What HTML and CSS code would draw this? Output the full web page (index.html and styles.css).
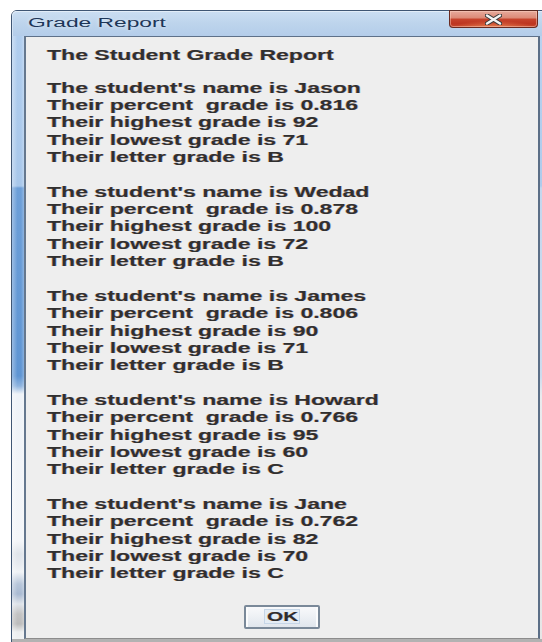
FILE: index.html
```html
<!DOCTYPE html>
<html lang="en">
<head>
<meta charset="utf-8">
<title>Grade Report</title>
<link rel="stylesheet" href="styles.css">
</head>
<body>
<div class="window">
  <div class="titlebar">
    <span class="caption">Grade Report</span>
    <button class="close" type="button" aria-label="Close">
      <svg width="17" height="11" viewBox="0 0 17 11">
        <path d="M2 1.5 L15 9.5 M15 1.5 L2 9.5" stroke="#3b3b3b" stroke-width="4.4" stroke-linecap="round"/>
        <path d="M2 1.5 L15 9.5 M15 1.5 L2 9.5" stroke="#f4f4f4" stroke-width="2.4" stroke-linecap="round"/>
      </svg>
    </button>
  </div>
  <div class="frame-row">
    <div class="frame-left"></div>
    <div class="panel">
      <div class="report">
        <p class="heading">The Student Grade Report</p>
        <div class="student">
          <p>The student's name is Jason</p>
          <p>Their percent  grade is 0.816</p>
          <p>Their highest grade is 92</p>
          <p>Their lowest grade is 71</p>
          <p>Their letter grade is B</p>
        </div>
        <div class="student">
          <p>The student's name is Wedad</p>
          <p>Their percent  grade is 0.878</p>
          <p>Their highest grade is 100</p>
          <p>Their lowest grade is 72</p>
          <p>Their letter grade is B</p>
        </div>
        <div class="student">
          <p>The student's name is James</p>
          <p>Their percent  grade is 0.806</p>
          <p>Their highest grade is 90</p>
          <p>Their lowest grade is 71</p>
          <p>Their letter grade is B</p>
        </div>
        <div class="student">
          <p>The student's name is Howard</p>
          <p>Their percent  grade is 0.766</p>
          <p>Their highest grade is 95</p>
          <p>Their lowest grade is 60</p>
          <p>Their letter grade is C</p>
        </div>
        <div class="student">
          <p>The student's name is Jane</p>
          <p>Their percent  grade is 0.762</p>
          <p>Their highest grade is 82</p>
          <p>Their lowest grade is 70</p>
          <p>Their letter grade is C</p>
        </div>
      </div>
      <button class="ok" type="button"><span class="ok-focus"><span class="ok-label">OK</span></span></button>
    </div>
    <div class="frame-right"></div>
  </div>
  <div class="frame-bottom"></div>
</div>
</body>
</html>
```

FILE: styles.css
```css
html, body {
  margin: 0;
  width: 542px;
  height: 642px;
  overflow: hidden;
  background: #ffffff;
}

body {
  box-sizing: border-box;
  padding: 10px 0 0 11px;
  font-family: "Liberation Sans", Arial, sans-serif;
}

/* Dialog window with a Windows 7 basic frame */
.window {
  width: 536px;
  border: 1px solid #3f5674;
  border-radius: 6px 6px 0 0;
  display: flex;
  flex-direction: column;
  background: #b6b6b6;
}

.titlebar {
  height: 25px;
  display: flex;
  align-items: flex-start;
  border-radius: 5px 5px 0 0;
  background: linear-gradient(to bottom, #cbdef2 0%, #bdd4ec 50%, #b4cdea 100%);
  box-shadow: inset 0 1px 0 #e2edf8, inset 1px 0 0 #d3e3f4;
}

.caption {
  display: inline-block;
  margin-left: 16px;
  font-size: 12.5px;
  line-height: 25px;
  color: #1d3658;
  transform: scaleX(1.82);
  transform-origin: 0 0;
  text-shadow: 0 0 3px rgba(255, 255, 255, 0.6);
  white-space: nowrap;
}

.close {
  margin: -1px 10px 0 auto;
  width: 89px;
  height: 18px;
  padding: 0;
  border: 1px solid #6a2a20;
  border-top-color: #5a2a22;
  border-radius: 0 0 4px 4px;
  display: flex;
  align-items: center;
  justify-content: center;
  background:
    radial-gradient(ellipse 45% 40% at 50% 100%, rgba(255, 170, 110, 0.55), rgba(255, 170, 110, 0) 100%),
    linear-gradient(to bottom, #e7aa9c 0%, #dc8b78 42%, #c6432c 52%, #bd3520 80%, #c94a2e 100%);
  box-shadow: inset 0 0 0 1px rgba(255, 215, 200, 0.45);
}

.close svg {
  display: block;
  margin-top: 1px;
}

.frame-row {
  display: flex;
}

.frame-left {
  width: 12px;
  background:
    linear-gradient(to right, rgba(255, 255, 255, 0.35) 0, rgba(255, 255, 255, 0) 45%, rgba(255, 255, 255, 0) 75%, rgba(255, 255, 255, 0.25) 100%),
    linear-gradient(to bottom,
      #b0cdee 0, #a8c7ea 150px, #6d9fd8 152px, #5f95d3 340px, #8fb4df 350px,
      #eef2f7 358px, #f4f6f9 505px, #dfe4ea 518px, #e6eaef 528px, #f0f3f6 536px,
      #b7c6da 548px, #a9bad2 558px, #dfe4ea 568px, #c3c3c3 578px, #bcbcbc 588px,
      #eceeef 596px, #f2f3f5 610px);
}

.frame-right {
  width: 8px;
  background: linear-gradient(to bottom, #b8d2ef 0, #afcbec 150px, #c4d7ee 152px, #cddcee 340px, #e9ebee 360px, #e6e6e6 610px);
}

.frame-bottom {
  height: 8px;
  background: #b2b2b2;
}

/* Content pane */
.panel {
  width: 512px;
  height: 601px;
  border-style: solid;
  border-color: #5e7189 #5b6e86 #8c8c8c #65788f;
  border-width: 1px 2px 1px 2px;
  background: #eeeeee;
  display: flex;
  flex-direction: column;
  padding: 8px 0 0 21px;
  box-sizing: content-box;
  margin-right: 0;
}

.panel {
  width: 491px;
  height: 593px;
}

.report {
  display: flex;
  flex-direction: column;
  gap: 17.35px;
  font-size: 14px;
  font-weight: bold;
  line-height: 17.35px;
  color: #303030;
  transform: scaleX(1.645);
  transform-origin: 0 0;
  text-shadow: -0.45px 0 rgba(225, 130, 30, 0.45), 0.45px 0 rgba(40, 80, 200, 0.4);
}

.report p {
  margin: 0;
  white-space: pre;
}

.heading {
  margin-top: 1.5px !important;
  margin-bottom: -1.5px !important;
}

.ok {
  align-self: center;
  margin: 22px 0 0 -22px;
  width: 76px;
  height: 24px;
  padding: 0;
  border: 2px solid #7a8999;
  border-radius: 2px;
  background: linear-gradient(to bottom, #f8f9fb 0%, #eef1f5 45%, #e0e6ed 100%);
  box-shadow: inset 2px 0 0 #fbfcfd, inset -2px 0 0 #fbfcfd;
  display: flex;
  align-items: center;
  justify-content: center;
  font-family: "Liberation Sans", Arial, sans-serif;
}

.ok-focus {
  width: 36px;
  height: 15px;
  box-sizing: border-box;
  border: 1px solid #c6d6e7;
  background: #e4ecf4;
  display: flex;
  align-items: center;
  justify-content: flex-start;
  overflow: visible;
}

.ok-label {
  display: inline-block;
  margin-left: 2px;
  font-size: 13px;
  font-weight: bold;
  line-height: 13px;
  color: #2e2e2e;
  transform: scaleX(1.6);
  transform-origin: 0 50%;
  text-shadow: -0.4px 0 rgba(225, 130, 30, 0.45), 0.4px 0 rgba(40, 80, 200, 0.4);
}
```
